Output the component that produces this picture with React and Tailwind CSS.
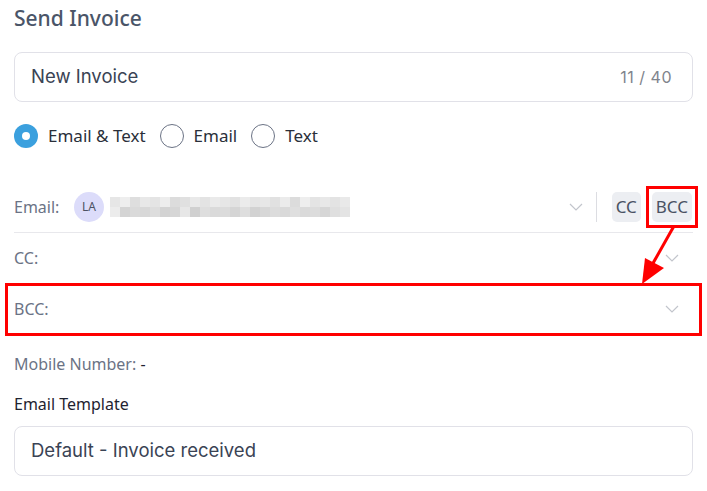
import { useState } from "react";

const blur = [
  ["#e6e6e6", "#eeeeee", "#dedede", "#e8e8e8", "#e4e4e4", "#ededed", "#dcdcdc", "#e0e0e0", "#e9e9e9", "#e3e3e3", "#eaeaea", "#e6e6e6", "#e2e2e2", "#ebebeb", "#e5e5e5", "#e7e7e7", "#e1e1e1", "#ebebeb", "#dcdcdc", "#eeeeee", "#e4e4e4", "#e8e8e8", "#e3e3e3", "#e9e9e9"],
  ["#ececec", "#d4d4d4", "#dadada", "#d8d8d8", "#dddddd", "#d3d3d3", "#d6d6d6", "#e7e7e7", "#d0d0d0", "#dedede", "#dadada", "#dbdbdb", "#d5d5d5", "#dedede", "#d2d2d2", "#d7d7d7", "#dcdcdc", "#d9d9d9", "#dfdfdf", "#dadada", "#dcdcdc", "#d6d6d6", "#dfdfdf", "#e4e4e4"],
];

function Chevron() {
  return (
    <svg width="14" height="8" viewBox="0 0 14 8" fill="none" className="shrink-0">
      <path d="M1 1l6 6 6-6" stroke="#c2c5cc" strokeWidth="1.2" />
    </svg>
  );
}

function Radio({ checked, label, onClick }) {
  return (
    <button type="button" onClick={onClick} className="flex items-center gap-[10px]">
      {checked ? (
        <span className="flex h-6 w-6 items-center justify-center rounded-full bg-[#3ba0de]">
          <span className="h-2 w-2 rounded-full bg-white" />
        </span>
      ) : (
        <span className="h-6 w-6 rounded-full border-[1.5px] border-[#6b7385]" />
      )}
      <span className="text-[17px] text-[#2a2f3a]">{label}</span>
    </button>
  );
}

export default function App() {
  const [mode, setMode] = useState("both");

  return (
    <div
      className="relative min-h-screen bg-white px-[14px] pt-[4px]"
      style={{ fontFamily: '"Noto Sans", "Open Sans", sans-serif' }}
    >
      <h2 className="text-[21px] leading-7 font-medium text-[#4a5568]">Send Invoice</h2>

      <div className="mt-[20px] flex h-[50px] items-center justify-between rounded-lg border border-[#e1e1e8] pl-[16px] pr-[20px]">
        <span className="text-[18.5px] text-[#3a4354]" style={{ fontFamily: "Inter, sans-serif" }}>
          New Invoice
        </span>
        <span className="text-[16px] tracking-[0.5px] text-[#80848c]" style={{ fontFamily: "Inter, sans-serif" }}>
          11 / 40
        </span>
      </div>

      <div className="mt-[21px] flex items-center gap-[14px]">
        <Radio checked={mode === "both"} label="Email & Text" onClick={() => setMode("both")} />
        <Radio checked={mode === "email"} label="Email" onClick={() => setMode("email")} />
        <Radio checked={mode === "text"} label="Text" onClick={() => setMode("text")} />
      </div>

      <div className="mt-[34px] flex h-[50px] items-center border-b border-[#e8e8ec]">
        <span className="w-[60px] text-[16px] text-[#6b7385]">Email:</span>
        <span className="flex h-[30px] w-[30px] items-center justify-center rounded-full bg-[#dcdcfa] text-[12px] text-[#4b5263]">
          LA
        </span>
        <div className="ml-[6px] flex flex-col">
          {blur.map((row, i) => (
            <div key={i} className="flex">
              {row.map((c, j) => (
                <span key={j} className="h-[10px] w-[10px]" style={{ backgroundColor: c }} />
              ))}
            </div>
          ))}
        </div>
        <div className="flex-1" />
        <Chevron />
        <span className="ml-[13px] h-[30px] w-px bg-[#dcdde2]" />
        <span className="ml-[15px] flex h-[30px] items-center rounded-[5px] bg-[#eceef2] px-[4px] text-[17px] text-[#4a5263]">
          CC
        </span>
        <span className="-mr-[5px] ml-[5px] border-[3px] border-[#ff0000] p-[3px]">
          <span className="flex h-[30px] items-center rounded-[5px] bg-[#eceef2] px-[4px] text-[17px] text-[#4a5263]">
            BCC
          </span>
        </span>
      </div>

      <div className="flex h-[50px] items-center justify-between pr-[14px]">
        <span className="text-[16px] text-[#6b7385]">CC:</span>
        <Chevron />
      </div>

      <div className="-mx-[9px] flex h-[53px] items-center justify-between border-[3px] border-[#ff0000] pl-[6px] pr-[20px]">
        <span className="text-[16px] text-[#6b7385]">BCC:</span>
        <Chevron />
      </div>

      <div className="mt-[17px] text-[16px] leading-[22px] text-[#6b7385]">
        Mobile Number: <span className="text-[#1f2330]">-</span>
      </div>

      <div className="mt-[17px] text-[16px] leading-[24px] text-[#1f2330]">Email Template</div>

      <div className="mt-[10px] flex h-[50px] items-center rounded-lg border border-[#e1e1e8] pl-[16px]">
        <span className="text-[18.5px] text-[#3a4354]" style={{ fontFamily: "Inter, sans-serif" }}>
          Default - Invoice received
        </span>
      </div>

      <svg className="pointer-events-none absolute left-0 top-0" width="707" height="491">
        <line x1="674" y1="226" x2="652" y2="265" stroke="#ff0000" strokeWidth="3" />
        <polygon points="642,284 645,258 664,268" fill="#ff0000" />
      </svg>
    </div>
  );
}
